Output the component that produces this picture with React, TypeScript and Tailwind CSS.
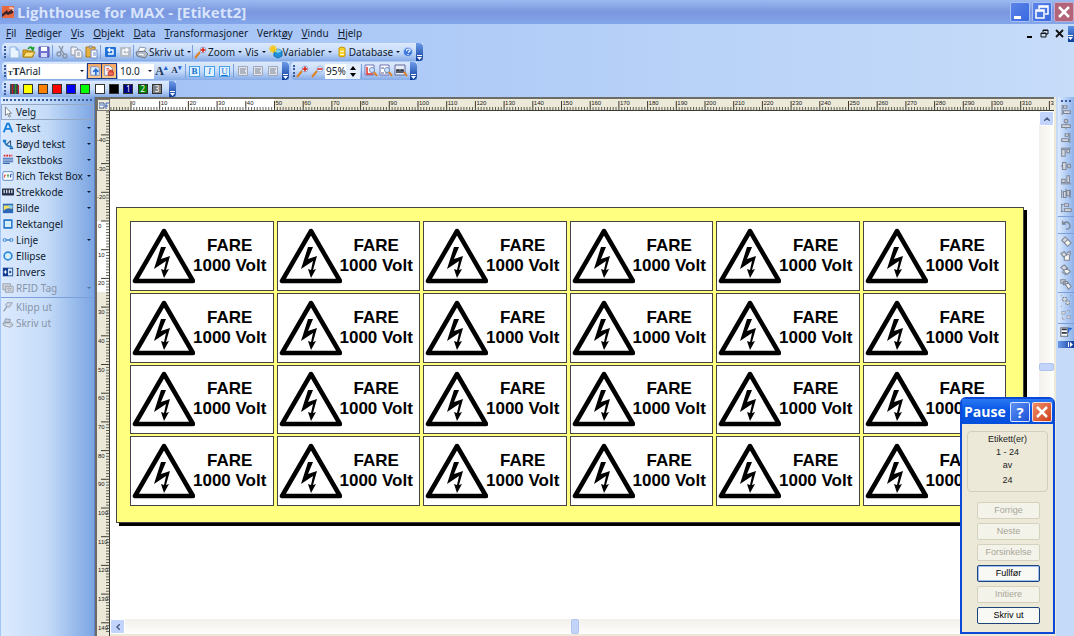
import { useState } from "react";
import type { ReactNode } from "react";

/**
 * Label editor workspace: title bar, menus, toolbars, rulers, sheet and print dialog
 */

const menus = ["Fil", "Rediger", "Vis", "Objekt", "Data", "Transformasjoner", "Verktøy", "Vindu", "Hjelp"];

const swatches = [
  { name: "Gul", color: "#ffff00" },
  { name: "Oransje", color: "#ff8000" },
  { name: "Rød", color: "#ff0000" },
  { name: "Blå", color: "#0000ff" },
  { name: "Grønn", color: "#00ff00" },
  { name: "Hvit", color: "#ffffff" },
  { name: "Svart", color: "#000000" },
  { name: "Farge 1", color: "#000080", text: "1" },
  { name: "Farge 2", color: "#008000", text: "2" },
  { name: "Farge 3", color: "#808080", text: "3" },
];

// 14x14 drawings shared by all toolbars
const icons: Record<string, ReactNode> = {
  newDoc: (
    <>
      <path d="M3 2h6l3 3v8H3z" fill="#e8f5ff" stroke="#8fb4e0" />
      <path d="M9 2v3h3" fill="#9cc8f0" stroke="#8fb4e0" />
    </>
  ),
  open: (
    <>
      <path d="M1 5h4l1 1h5v6H1z" fill="#e0a820" stroke="#b08010" />
      <path d="M1 12l3-5h9l-3 5z" fill="#ffe27a" stroke="#b08010" />
      <path d="M6 4q3-4 5 0M9 3l2 2 1-3" fill="none" stroke="#20a030" strokeWidth="1.5" />
    </>
  ),
  save: (
    <>
      <path d="M2 2h10v10H2z" fill="#7070d0" stroke="#5050a8" />
      <path d="M4 2h6v4H4z" fill="#fff" />
      <path d="M4 8h6v4H4z" fill="#d8dcf8" />
    </>
  ),
  cut: (
    <g fill="none" stroke="#8a94a4" strokeWidth="1.4">
      <path d="M4 1l5 8M8 1L5 8" />
      <circle cx="4" cy="9" r="2" />
      <circle cx="10" cy="11" r="2" />
    </g>
  ),
  copy: (
    <g fill="#eef0f4" stroke="#8f98a8">
      <path d="M1 2h5l2 2v6H1z" />
      <path d="M5 5h5l2 2v6H5z" />
      <path d="M7 8h3M7 10h3" />
    </g>
  ),
  paste: (
    <>
      <path d="M1 2h9v10H1z" fill="#e8b040" stroke="#a87820" />
      <path d="M4 1h3v2H4z" fill="#ddd" stroke="#888" />
      <path d="M6 5h6v8H6z" fill="#fff" stroke="#6c8cc8" />
      <path d="M8 8h3M8 10h3" stroke="#6c8cc8" />
    </>
  ),
  undo: (
    <>
      <rect x="2" y="2" width="11" height="10" rx="1" fill="#2070d8" />
      <path d="M5 9h5V5H5M7 3L5 5l2 2" fill="none" stroke="#fff" strokeWidth="1.4" />
    </>
  ),
  redo: (
    <>
      <rect x="2" y="2" width="11" height="10" rx="1" fill="#b4bcc8" />
      <path d="M10 9H5V5h5M8 3l2 2-2 2" fill="none" stroke="#fff" strokeWidth="1.4" />
    </>
  ),
  printer: (
    <>
      <path d="M5 2l6 1-2 4-6-1z" fill="#fff" stroke="#8c98a8" />
      <path d="M1 7l9-1 3 3-3 4-8-2z" fill="#b4bcc8" stroke="#6c7888" />
      <path d="M4 9l5 1" stroke="#fff" />
    </>
  ),
  printerGray: (
    <g fill="#c4ccd8" stroke="#8c98a8">
      <path d="M4 2l6 1-2 4-5-1z" />
      <path d="M1 7l9-1 3 3-3 3-8-2z" />
      <path d="M4 9l5 1" stroke="#fff" />
    </g>
  ),
  wand: (
    <>
      <path d="M1 13l5-6" stroke="#e08020" strokeWidth="2" />
      <circle cx="9" cy="5" r="3" fill="#dcecff" stroke="#9cb4dc" />
      <path d="M9 2.500v5M6.500 5h5" stroke="#e02010" strokeWidth="1.5" />
    </>
  ),
  wandMinus: (
    <>
      <path d="M1 13l5-6" stroke="#e08020" strokeWidth="2" />
      <circle cx="9" cy="5" r="3" fill="#dcecff" stroke="#9cb4dc" />
      <path d="M6.500 5h5" stroke="#e02010" strokeWidth="1.5" />
    </>
  ),
  variable: (
    <>
      <path d="M5 6l4-2 4 2v5l-4 2-4-2z" fill="#2090d8" stroke="#1070b0" />
      <path d="M5 6l4 2 4-2-4-2z" fill="#80d0f8" />
      <path d="M4 0v8M0 4h8M1 1l6 6M7 1L1 7" stroke="#f8c818" strokeWidth="1.5" />
    </>
  ),
  database: (
    <>
      <path d="M4 3q3-2 6 0v8q-3 2-6 0z" fill="#f8d020" stroke="#c89808" />
      <path d="M5 6q2 1 4 0M5 9q2 1 4 0" fill="none" stroke="#fff" />
    </>
  ),
  help: (
    <>
      <circle cx="7" cy="7" r="4.5" fill="#3c78e0" stroke="#a8c8f8" />
      <path d="M5.5 6q0-2 2-2t1.5 2L7 7.500M7 9v1" fill="none" stroke="#fff" strokeWidth="1.2" />
    </>
  ),
  tagUp: (
    <>
      <path d="M2 2h8l2 2v8H2z" fill="#e4f0ff" stroke="#6c8cc8" />
      <path d="M8 12V6M5 8l3-3 3 3" fill="none" stroke="#2870d0" strokeWidth="2" />
    </>
  ),
  tagRed: (
    <>
      <path d="M2 1h6l3 3v8H2z" fill="#fff" stroke="#6c8cc8" />
      <path d="M4 4h3M4 6h4" stroke="#e03020" />
      <path d="M6 8h6v4H6zM8 8V6h3v2" fill="#f07060" stroke="#c03020" />
    </>
  ),
  alignText: (
    <>
      <path d="M2.500 2.500h9v9h-9z" fill="#e0e4ec" stroke="#a0a8b8" />
      <path d="M4 5h6M4 7h5M4 9h6" stroke="#7c8494" />
    </>
  ),
  zoomPage: (
    <>
      <path d="M1 1h9v10H1z" fill="#fff" stroke="#7070b8" />
      <path d="M3 3v7h6" fill="none" stroke="#e03028" strokeWidth="1.500" />
      <circle cx="8" cy="6" r="2.5" fill="#cfe4ff" stroke="#7090c0" />
      <path d="M10 8l3 4" stroke="#e08020" strokeWidth="2" />
    </>
  ),
  zoomSelection: (
    <>
      <path d="M1 1h9v10H1z" fill="#fff" stroke="#7070b8" />
      <path d="M2 9h3M6 9h3M2 4h3" stroke="#506090" />
      <circle cx="8" cy="6" r="2.5" fill="#cfe4ff" stroke="#7090c0" />
      <path d="M10 8l3 4" stroke="#e08020" strokeWidth="2" />
    </>
  ),
  zoomObjects: (
    <>
      <path d="M1 1h10v10H1z" fill="#e8ecf8" stroke="#606898" />
      <path d="M3 9V6h2v3M7 9V6h2v3" fill="none" stroke="#202838" strokeWidth="1.5" />
      <path d="M10 8l3 4" stroke="#e08020" strokeWidth="2" />
    </>
  ),
  pointer: <path d="M4 1v10l2.500-2 2 4 1.500-1-2-3.500h3z" fill="#fff" stroke="#6c7480" />,
  text: <path d="M2 12L6 2h2l4 10M4 8h6" fill="none" stroke="#1880d8" strokeWidth="2.200" />,
  curved: (
    <>
      <path d="M1 2h4v3H1z" fill="#2080c8" />
      <path d="M3 4q1 6 9 6" fill="none" stroke="#2080c8" strokeWidth="2" />
      <path d="M5 8l5-5M10 3v6" stroke="#305080" strokeWidth="1.200" />
      <path d="M9 12h4" stroke="#1860b0" strokeWidth="2" />
    </>
  ),
  textbox: (
    <>
      <path d="M2 2h10" stroke="#e02020" strokeWidth="2" strokeDasharray="2 1" />
      <path d="M1 5h12M1 7h12M1 9h12M1 11h8" stroke="#3c68b0" strokeWidth="1.300" />
    </>
  ),
  rich: (
    <>
      <rect x="1" y="2" width="12" height="10" rx="1" fill="#fff" stroke="#4878c0" />
      <path d="M3 9V6h2" fill="none" stroke="#e03020" />
      <path d="M7 5v4M6 6h2" stroke="#209030" />
      <path d="M10 9V5h2M9 7h2" fill="none" stroke="#2050c0" />
    </>
  ),
  barcode: (
    <>
      <rect x="0" y="3" width="14" height="8" rx="1" fill="#202c48" />
      <path d="M2.500 4.500v4M5.500 4.500v4M8.500 4.500v4M11.500 4.500v4" stroke="#fff" strokeWidth="1.300" />
    </>
  ),
  image: (
    <>
      <rect x="1" y="2" width="12" height="11" fill="#2c68b8" />
      <path d="M2 4h10v4q-6-2-10 2z" fill="#f8e060" />
      <path d="M7 4h5v3q-4 0-5-3z" fill="#88d0f8" />
    </>
  ),
  rect: <path d="M2.500 2.500h9v9h-9z" fill="#d4eeff" stroke="#2878c8" strokeWidth="1.800" />,
  line: (
    <g fill="#c8e4ff" stroke="#2878c8">
      <path d="M4 7h6" strokeWidth="1.500" />
      <circle cx="3" cy="7" r="1.800" />
      <circle cx="11" cy="7" r="1.800" />
    </g>
  ),
  ellipse: <circle cx="7" cy="7" r="4.500" fill="#d4eeff" stroke="#3088d8" strokeWidth="2" />,
  invert: (
    <>
      <path d="M1 2h12v10H1z" fill="#103c90" />
      <path d="M7 3h5v8H7z" fill="#d8e8ff" />
      <path d="M2 7h4M4 5v4" stroke="#fff" strokeWidth="1.300" />
      <path d="M8 7h3M9.500 5.500v3" stroke="#103c90" strokeWidth="1.300" />
    </>
  ),
  rfid: (
    <g fill="#d0d4dc" stroke="#98a0ac">
      <path d="M1 2h9v7H1z" />
      <path d="M4 5h9v7H4z" />
      <path d="M6 8q2-2 5 0M7 10q2-1 3 0" fill="none" />
    </g>
  ),
  clip: (
    <>
      <path d="M2 12l4-6" stroke="#909cb0" strokeWidth="1.500" />
      <path d="M4 5l2-3h6L9 7H7z" fill="#d0d8e4" stroke="#909cb0" />
    </>
  ),
  alignLeft: (
    <>
      <path d="M2.500 1v12" />
      <path d="M4 2h4v3H4zM4 8h8v3H4z" />
    </>
  ),
  alignCenter: (
    <>
      <path d="M7 1v12" />
      <path d="M5 2h4v3H5zM2 8h10v3H2z" />
    </>
  ),
  alignRight: (
    <>
      <path d="M11.500 1v12" />
      <path d="M6 2h4v3H6zM2 8h8v3H2z" />
    </>
  ),
  alignTop: (
    <>
      <path d="M1 2.500h12" />
      <path d="M2 4h4v8H2zM8 4h3v4H8z" />
    </>
  ),
  alignMiddle: (
    <>
      <path d="M1 7h12" />
      <path d="M3 3h4v8H3zM9 5h3v4H9z" />
    </>
  ),
  alignBottom: (
    <>
      <path d="M1 11.500h12" />
      <path d="M2 6h4v4H2zM8 2h3v8H8z" />
    </>
  ),
  spreadX: (
    <>
      <path d="M2 2v10M12 2v10M7 1v3" />
      <path d="M4 4h3v7H4zM8 3h3v6H8z" />
    </>
  ),
  spreadY: (
    <>
      <path d="M2 2v10M1 3h3M1 11h3" />
      <path d="M5 2h5v3H5zM5 8h8v3H5z" />
    </>
  ),
  rotate: <path d="M3 2v4h4M3 6q5-5 8 0t-4 6" fill="none" strokeWidth="1.500" />,
  front: (
    <>
      <path d="M2 5l4-4 4 4-4 4z" />
      <path d="M5 8l4-4 4 4-4 4z" fill="#f4f4f0" />
    </>
  ),
  back: (
    <>
      <path d="M5 5h6v7H5z" fill="#f4f4f0" />
      <path d="M1 4l4-2 3 4-4 2zM8 3l4-1v4" />
    </>
  ),
  forward: (
    <>
      <path d="M1 4l4-3 4 4-4 3z" />
      <path d="M4 8l4-3 4 4-4 3z" fill="#f4f4f0" />
      <path d="M2 9l5 4" />
    </>
  ),
  backward: (
    <>
      <path d="M1 2h5v4H1zM4 4h5v4H4z" />
      <path d="M6 7l4-1 3 4-3 3z" fill="#f4f4f0" />
    </>
  ),
  group: <path d="M3 3h5v4H3zM7 7h4v4H7zM1 1h1M12 1h1M1 13h1M12 13h1" strokeDasharray="2 1" />,
  ungroup: <path d="M2 3h4v3H2zM8 8h4v3H8zM8 2h3v3M3 9v3h3" strokeDasharray="1 1" />,
  form: (
    <>
      <path d="M1 2h8v10H1z" fill="#fff" stroke="#687080" />
      <path d="M2 4h6M2 8h6" stroke="#303848" strokeWidth="2" />
      <path d="M10 8V3h2M10 2l3 1-2 2" fill="none" stroke="#2060d0" />
    </>
  ),
};

function Icon({ name, className = "h-3.5 w-3.5" }: { name: string; className?: string }) {
  return (
    <svg viewBox="0 0 14 14" className={`shrink-0 ${className}`} aria-hidden="true">
      {icons[name]}
    </svg>
  );
}

function Tool({ name, label }: { name: string; label: string }) {
  return (
    <button type="button" aria-label={label} className="flex w-[15px] shrink-0 justify-center">
      <Icon name={name} />
    </button>
  );
}

function MenuTool({ name, label }: { name?: string; label: string }) {
  return (
    <button type="button" className="flex shrink-0 items-center">
      {name && <Icon name={name} />}
      <span>{label}</span>
      <Arrow className="ml-[3px]" />
    </button>
  );
}

function Arrow({ className = "" }: { className?: string }) {
  return (
    <svg viewBox="0 0 4 2" className={`h-0.5 w-1 shrink-0 ${className}`} aria-hidden="true">
      <path d="M0 0h4L2 2z" fill="#101828" />
    </svg>
  );
}

function Separator() {
  return <span className="mx-px h-3.5 w-px shrink-0 bg-[#7c9fdc]" />;
}

function Bar({ children, className = "" }: { children: ReactNode; className?: string }) {
  return (
    <div
      className={`flex items-center rounded-l-sm bg-linear-to-b from-[#dce9fd] via-[#c6dbfa] to-[#86abe6] ${className}`}
    >
      <span className="ml-0.5 h-3 shrink-0 border-l-2 border-dotted border-[#3b5c9c]" />
      {children}
      <span className="ml-auto flex h-full w-[7px] shrink-0 items-end justify-center rounded-r-sm bg-linear-to-b from-[#6d9bea] to-[#0a3c9c] pb-px">
        <svg viewBox="0 0 5 5" className="h-[5px] w-[5px]" aria-hidden="true">
          <path d="M0 0h5v1H0zM0 2h5L2.500 5z" fill="#fff" />
        </svg>
      </span>
    </div>
  );
}

function TitleBar() {
  return (
    <header className="flex h-6 shrink-0 items-center bg-linear-to-b from-[#9bb9f0] via-[#7a96df] to-[#83a6ea] pl-0.5">
      <svg viewBox="0 0 12 12" className="h-3 w-3 shrink-0" aria-hidden="true">
        <rect width="12" height="12" rx="1" fill="#e86840" />
        <path d="M0 8l5-4 1 2 5-3v4L6 9 4 8l-4 3z" fill="#40242c" />
        <path d="M7 2h4v3" fill="none" stroke="#fff" />
      </svg>
      <h1 className="ml-[3px] font-['Open_Sans'] text-[15px] leading-6 font-bold whitespace-nowrap text-[#d8e4fc]">
        Lighthouse for MAX - [Etikett2]
      </h1>
      <div className="ml-auto flex h-5 gap-0.5">
        <button type="button" aria-label="Minimer" className="w-5 rounded-xs border border-[#a8c0f4] bg-linear-to-br from-[#5c84e8] to-[#3868e0]">
          <svg viewBox="0 0 18 18" aria-hidden="true">
            <path d="M3 13h7v3H3z" fill="#fff" />
          </svg>
        </button>
        <button type="button" aria-label="Gjenopprett" className="w-5 rounded-xs border border-[#a8c0f4] bg-linear-to-br from-[#5c84e8] to-[#3868e0]">
          <svg viewBox="0 0 18 18" fill="none" stroke="#fff" aria-hidden="true">
            <path d="M6 6V3h9v8h-3M6 4h9" strokeWidth="1.500" />
            <path d="M3 7h8v8H3zM3 8h8" strokeWidth="1.500" />
          </svg>
        </button>
        <button type="button" aria-label="Lukk" className="w-5 rounded-xs border border-[#c8a8c8] bg-[#b46478]">
          <svg viewBox="0 0 18 18" aria-hidden="true">
            <path d="M4 4l10 10M14 4L4 14" stroke="#fff" strokeWidth="2.500" />
          </svg>
        </button>
      </div>
    </header>
  );
}

function MenuBar() {
  return (
    <nav className="flex h-[19px] shrink-0 items-center pl-1.5 text-[10px]">
      <ul className="flex gap-[9px]">
        {menus.map((menu) => {
          // The underlined letter of "Verktøy" is not the first one
          const at = menu === "Verktøy" ? 5 : 0;
          return (
            <li key={menu}>
              <button type="button">
                {menu.slice(0, at)}
                <u>{menu[at]}</u>
                {menu.slice(at + 1)}
              </button>
            </li>
          );
        })}
      </ul>
      <div className="ml-auto flex h-full items-center gap-1">
        <div className="flex items-center gap-1.5">
          <button type="button" aria-label="Minimer dokument">
            <svg viewBox="0 0 9 9" className="h-[9px] w-[9px]" aria-hidden="true">
              <path d="M2 7h5v2H2z" />
            </svg>
          </button>
          <button type="button" aria-label="Gjenopprett dokument">
            <svg viewBox="0 0 9 9" className="h-[9px] w-[9px]" fill="none" stroke="#111" aria-hidden="true">
              <path d="M3 3V1h5v4H6M3 1.500h5M1 4h5v4H1zM1 4.500h5" />
            </svg>
          </button>
          <button type="button" aria-label="Lukk dokument">
            <svg viewBox="0 0 9 9" className="h-[9px] w-[9px]" stroke="#111" strokeWidth="1.800" aria-hidden="true">
              <path d="M1 1l7 7M8 1L1 8" />
            </svg>
          </button>
        </div>
        <span className="flex h-4 w-1.5 items-end bg-linear-to-b from-[#5c92e8] to-[#0a3c9c] pb-0.5">
          <svg viewBox="0 0 5 5" className="h-[5px] w-[5px]" aria-hidden="true">
            <path d="M0 0h5v1H0zM0 2h5L2.500 5z" fill="#fff" />
          </svg>
        </span>
      </div>
    </nav>
  );
}

function StyleTool({ letter, label, className }: { letter: string; label: string; className: string }) {
  return (
    <button type="button" aria-label={label} className="flex w-[15px] shrink-0 justify-center">
      <span className={`h-[11px] w-[11px] border border-[#48a0e8] bg-[#dff0ff] text-center font-['Liberation_Serif'] text-[9px] leading-[9px] text-[#1870d0] ${className}`}>
        {letter}
      </span>
    </button>
  );
}

function Toolbars() {
  const [zoom, setZoom] = useState("95%");

  return (
    <div className="flex shrink-0 flex-col items-start gap-px pl-0.5 text-[10px]">
      <Bar className="h-[18px] w-[421px]">
        <Tool name="newDoc" label="Ny" />
        <Tool name="open" label="Åpne" />
        <Tool name="save" label="Lagre" />
        <Separator />
        <Tool name="cut" label="Klipp" />
        <Tool name="copy" label="Kopier" />
        <Tool name="paste" label="Lim inn" />
        <Separator />
        <Tool name="undo" label="Angre" />
        <Tool name="redo" label="Gjør om" />
        <Separator />
        <MenuTool name="printer" label="Skriv ut" />
        <Separator />
        <div className="flex gap-[3px]">
          <MenuTool name="wand" label="Zoom" />
          <MenuTool label="Vis" />
          <MenuTool name="variable" label="Variabler" />
          <MenuTool name="database" label="Database" />
        </div>
        <Tool name="help" label="Hjelp" />
      </Bar>
      <div className="flex gap-0.5">
        <Bar className="h-[18px] w-[287px]">
          <label className="relative ml-px flex h-[15px] w-[79px] shrink-0 items-center bg-white pl-px">
            <span className="font-['Liberation_Serif'] text-[10px] font-bold" aria-hidden="true">
              <span className="text-[7px]">T</span>T
            </span>
            <select aria-label="Skrift" className="flex-1 appearance-none bg-transparent outline-none">
              <option>Arial</option>
            </select>
            <Arrow className="pointer-events-none absolute right-0.5" />
          </label>
          <div className="mx-px flex h-4 shrink-0">
            <button type="button" aria-label="Tilpass opp" className="flex w-[15px] items-center justify-center border border-[#203c88] bg-linear-to-b from-[#f8a860] to-[#fcc888]">
              <Icon name="tagUp" className="h-3 w-3" />
            </button>
            <button type="button" aria-label="Tilpass ramme" className="-ml-px flex w-4 items-center justify-center border border-[#203c88] bg-linear-to-b from-[#f8a860] to-[#fcc888]">
              <Icon name="tagRed" className="h-3 w-3" />
            </button>
          </div>
          <label className="relative flex h-[15px] w-[36px] shrink-0 items-center bg-white pl-0.5">
            <select aria-label="Størrelse" className="w-full appearance-none bg-transparent outline-none">
              <option>10.0</option>
            </select>
            <Arrow className="pointer-events-none absolute right-0.5" />
          </label>
          <div className="flex shrink-0 font-['Liberation_Serif'] font-bold text-[#243858]">
            <button type="button" aria-label="Større skrift" className="flex w-[15px] items-center justify-center text-[12px]">
              A<sup className="text-[7px] text-[#2060d0]">▴</sup>
            </button>
            <button type="button" aria-label="Mindre skrift" className="flex w-[15px] items-center justify-center text-[9px]">
              A<sup className="text-[7px] text-[#2060d0]">▾</sup>
            </button>
          </div>
          <Separator />
          <StyleTool letter="B" label="Fet" className="font-bold" />
          <StyleTool letter="I" label="Kursiv" className="italic" />
          <StyleTool letter="U" label="Understreket" className="underline" />
          <Separator />
          <Tool name="alignText" label="Venstrejuster" />
          <Tool name="alignText" label="Midtstill" />
          <Tool name="alignText" label="Høyrejuster" />
        </Bar>
        <Bar className="h-[18px] w-[126px]">
          <Tool name="wand" label="Zoom inn" />
          <Tool name="wandMinus" label="Zoom ut" />
          <input
            aria-label="Zoom prosent"
            value={zoom}
            onChange={(e) => setZoom(e.target.value)}
            className="h-[15px] w-[21px] shrink-0 bg-white pl-px outline-none"
          />
          <div className="flex h-[15px] w-3.5 shrink-0 flex-col items-center justify-between bg-[#e4eefc] py-0.5">
            <button type="button" aria-label="Øk">
              <svg viewBox="0 0 6 4" className="h-1 w-1.5" aria-hidden="true">
                <path d="M0 4h6L3 0z" />
              </svg>
            </button>
            <button type="button" aria-label="Reduser">
              <svg viewBox="0 0 6 4" className="h-1 w-1.5" aria-hidden="true">
                <path d="M0 0h6L3 4z" />
              </svg>
            </button>
          </div>
          <Separator />
          <Tool name="zoomPage" label="Vis side" />
          <Tool name="zoomSelection" label="Vis utvalg" />
          <Tool name="zoomObjects" label="Vis objekter" />
        </Bar>
      </div>
      <Bar className="h-4 w-[174px]">
        <div className="flex w-[160px] items-center justify-between px-1">
          <button type="button" aria-label="Flere farger">
            <svg viewBox="0 0 9 10" className="h-2.5 w-[9px]" aria-hidden="true">
              <path d="M1 0v10M4 0v10M7 0v10" stroke="#181818" strokeWidth="1.500" />
              <path d="M2.500 0v10M8.500 1v9" stroke="#c02020" />
              <path d="M5.500 0v10" stroke="#20a020" />
            </svg>
          </button>
          {swatches.map((s) => (
            <button
              key={s.name}
              type="button"
              aria-label={s.name}
              className="h-2.5 w-2.5 border border-[#333] text-center text-[8px] leading-[8px] text-white"
              style={{ backgroundColor: s.color }}
            >
              {s.text}
            </button>
          ))}
        </div>
      </Bar>
    </div>
  );
}

const drawTools = [
  { icon: "pointer", label: "Velg" },
  { icon: "text", label: "Tekst", menu: true },
  { icon: "curved", label: "Bøyd tekst", menu: true },
  { icon: "textbox", label: "Tekstboks", menu: true },
  { icon: "rich", label: "Rich Tekst Box", menu: true },
  { icon: "barcode", label: "Strekkode", menu: true },
  { icon: "image", label: "Bilde", menu: true },
  { icon: "rect", label: "Rektangel" },
  { icon: "line", label: "Linje", menu: true },
  { icon: "ellipse", label: "Ellipse" },
  { icon: "invert", label: "Invers" },
  { icon: "rfid", label: "RFID Tag", menu: true, disabled: true },
  { icon: "clip", label: "Klipp ut", disabled: true },
  { icon: "printerGray", label: "Skriv ut", disabled: true },
];

function DrawPanel() {
  return (
    <aside className="w-[95px] shrink-0 border-x border-l-[#a4c4fc] border-r-[#5c84c8] bg-linear-to-r from-[#dceafe] via-[#c4dbf8] to-[#7ba5e2] pt-0.5 text-[10px]">
      <div className="mx-0.5 mb-[3px] border-t-2 border-dotted border-[#3b5c9c]" />
      {drawTools.map((tool, i) => (
        <div key={tool.label} className={tool.label === "Klipp ut" ? "mt-px border-t border-[#7c9fdc] pt-px" : ""}>
          <button
            type="button"
            disabled={tool.disabled}
            className={`flex h-4 w-full items-center gap-0.5 pr-0.5 whitespace-nowrap ${
              i === 0 ? "border border-[#94a8c4]" : "border border-transparent"
            } ${tool.disabled ? "text-[#8894a8]" : "text-[#101c30]"}`}
          >
            <Icon name={tool.icon} className="h-3 w-3" />
            <span>{tool.label}</span>
            {tool.menu && <Arrow className={`ml-auto ${tool.disabled ? "opacity-40" : ""}`} />}
          </button>
        </div>
      ))}
    </aside>
  );
}

// Pixels for ten millimetres on the rulers
const STEP = 28.7;

function HorizontalRuler() {
  const ticks = Array.from({ length: 328 }, (_, i) => i - 7);
  return (
    <svg className="block h-3 w-full" fontFamily="Liberation Sans" aria-hidden="true">
      <rect width="100%" height="12" fill="#ece9d8" />
      <rect x="21" width="143" height="12" fill="#fff" />
      {ticks.map((t) => {
        const x = 21 + (t * STEP) / 10;
        return <path key={t} d={`M${x} ${t % 10 === 0 ? 2 : 8}V12`} stroke="#3c3c34" strokeWidth={t % 10 === 0 ? 1 : 0.8} />;
      })}
      {ticks
        .filter((t) => t % 10 === 0)
        .map((t) => (
          <text key={t} x={22 + (t * STEP) / 10} y="6" fontSize="6" fill="#202020">
            {t}
          </text>
        ))}
      <path d="M0 11.500H4000" stroke="#3c3c34" />
    </svg>
  );
}

function VerticalRuler() {
  const ticks = Array.from({ length: 182 }, (_, i) => i - 38);
  return (
    <svg className="block h-full w-[13px]" fontFamily="Liberation Sans" aria-hidden="true">
      <rect width="13" height="100%" fill="#ece9d8" />
      <rect y="110" width="13" height="71" fill="#fff" />
      {ticks.map((t) => {
        const y = 110 + (t * STEP) / 10;
        return <path key={t} d={`M${t % 10 === 0 ? 4 : 9} ${y}H13`} stroke="#3c3c34" strokeWidth={t % 10 === 0 ? 1 : 0.8} />;
      })}
      {ticks
        .filter((t) => t % 10 === 0)
        .map((t) => (
          <text key={t} x={t < 0 ? 0 : 1} y={117 + (t * STEP) / 10} fontSize="6" fill="#202020">
            {t < 0 ? t - 10 : t}
          </text>
        ))}
      <path d="M12.500 0V4000" stroke="#3c3c34" />
    </svg>
  );
}

function WarningLabel() {
  return (
    <div className="flex items-center border border-[#444] bg-white">
      <svg viewBox="0 0 64 56" className="h-14 w-16 shrink-0" aria-hidden="true">
        <path d="M33 3L4 53h58z" fill="#fff" stroke="#000" strokeWidth="4.500" strokeLinejoin="round" />
        <path d="M30 19h5l-5 12 9-3-4 14 3-1-5 9-3-9 3 1 2-9-12 8z" />
      </svg>
      <div className="-ml-0.5 text-center font-['Liberation_Sans'] text-[17px] leading-5 font-bold whitespace-nowrap text-black">
        <p>FARE</p>
        <p>1000 Volt</p>
      </div>
    </div>
  );
}

function Sheet() {
  return (
    <div className="mt-24 ml-1.5 h-[316px] w-[908px] shrink-0 border border-[#444] bg-[#ffff80] pt-[13px] pr-[17px] pb-4 pl-[13px] shadow-[3px_3px_0_0_#000]">
      <div className="grid h-full grid-cols-6 grid-rows-4 gap-x-[3px] gap-y-0.5">
        {Array.from({ length: 24 }, (_, i) => (
          <WarningLabel key={i} />
        ))}
      </div>
    </div>
  );
}

function Workspace() {
  return (
    <main className="flex min-w-0 flex-1 flex-col border-t-2 border-l-2 border-[#6c6c64] bg-white">
      <div className="flex">
        <div className="flex h-3 w-[13px] shrink-0 items-center justify-center border border-[#777] bg-[#ece9d8]">
          <svg viewBox="0 0 10 9" className="h-[9px] w-2.5" aria-hidden="true">
            <path d="M0 2h5v5H0z" fill="#fff" stroke="#3c5488" />
            <path d="M1 4h3M7 8V2h3M6 5h3" fill="none" stroke="#3868c8" />
          </svg>
        </div>
        <div className="min-w-0 flex-1">
          <HorizontalRuler />
        </div>
      </div>
      <div className="flex min-h-0 flex-1">
        <div className="w-[13px] shrink-0 overflow-hidden">
          <VerticalRuler />
        </div>
        <div className="flex min-w-0 flex-1 flex-col">
          <div className="flex min-h-0 flex-1">
            <div className="min-w-0 flex-1 overflow-hidden">
              <Sheet />
            </div>
            <div className="flex w-[15px] shrink-0 flex-col bg-linear-to-r from-[#f2f0ea] to-[#fefefc]">
              <button type="button" aria-label="Rull opp" className="flex h-[15px] items-center justify-center rounded-xs border border-white bg-[#c2d3fc]">
                <svg viewBox="0 0 6 4" className="h-1 w-1.5" fill="none" stroke="#4d6185" strokeWidth="1.500" aria-hidden="true">
                  <path d="M0 4l3-3 3 3" />
                </svg>
              </button>
              <div className="flex-[237]" />
              <div className="h-2 rounded-xs border border-[#b0c4f0] bg-[#c2d3fc]" />
              <div className="flex-[248]" />
            </div>
          </div>
          <div className="flex h-[15px] shrink-0 bg-linear-to-b from-[#f2f0ea] to-[#fefefc]">
            <button type="button" aria-label="Rull til venstre" className="flex w-[15px] items-center justify-center rounded-xs border border-white bg-[#c2d3fc]">
              <svg viewBox="0 0 4 6" className="h-1.5 w-1" fill="none" stroke="#4d6185" strokeWidth="1.500" aria-hidden="true">
                <path d="M4 0L1 3l3 3" />
              </svg>
            </button>
            <div className="flex-[447]" />
            <div className="w-2 rounded-xs border border-[#b0c4f0] bg-[#c2d3fc]" />
            <div className="flex-[476]" />
          </div>
          <div className="h-0.5 shrink-0 bg-[#ece9d8]" />
        </div>
      </div>
    </main>
  );
}

const arrangeGroups = [
  [
    { icon: "alignLeft", label: "Juster venstre" },
    { icon: "alignCenter", label: "Juster midt" },
    { icon: "alignRight", label: "Juster høyre" },
    { icon: "alignTop", label: "Juster topp" },
    { icon: "alignMiddle", label: "Juster senter" },
    { icon: "alignBottom", label: "Juster bunn" },
    { icon: "spreadX", label: "Fordel vannrett" },
    { icon: "spreadY", label: "Fordel loddrett" },
  ],
  [{ icon: "rotate", label: "Roter" }],
  [
    { icon: "front", label: "Flytt fremst" },
    { icon: "back", label: "Flytt bakerst" },
    { icon: "forward", label: "Flytt fremover" },
    { icon: "backward", label: "Flytt bakover" },
  ],
  [
    { icon: "group", label: "Grupper" },
    { icon: "ungroup", label: "Del opp" },
  ],
  [{ icon: "form", label: "Skjema" }],
];

function ArrangePanel() {
  return (
    <aside className="flex w-5 shrink-0 flex-col items-end border-l-2 border-[#ece9d8] bg-[#c4daf8]">
      <div className="w-4 rounded-b-sm bg-linear-to-r from-[#dceafe] to-[#8db2ea] pt-[3px]">
        <div className="mx-[3px] border-t-2 border-dotted border-[#3b5c9c]" />
        {arrangeGroups.map((group, i) => (
          <div key={i} className={i > 0 ? "mt-px border-t border-[#7c9fdc] pt-px" : "pt-px"}>
            {group.map((tool) => (
              <button key={tool.icon} type="button" aria-label={tool.label} className="flex h-3.5 w-full items-center justify-center">
                <svg viewBox="0 0 14 14" className="h-3 w-3" fill="#d4d8e0" stroke="#7c8494" strokeWidth="1.200" aria-hidden="true">
                  {icons[tool.icon]}
                </svg>
              </button>
            ))}
          </div>
        ))}
        <div className="mt-0.5 flex h-[7px] items-center justify-end bg-linear-to-r from-[#6d9bea] to-[#0a3c9c] pr-px">
          <svg viewBox="0 0 5 5" className="h-[5px] w-[5px]" aria-hidden="true">
            <path d="M0 0h1v5H0zM2 0v5l3-2.500z" fill="#fff" />
          </svg>
        </div>
      </div>
    </aside>
  );
}

const dialogButtons = [
  { label: "Forrige", disabled: true },
  { label: "Neste", disabled: true },
  { label: "Forsinkelse", disabled: true },
  { label: "Fullfør", primary: true },
  { label: "Initiere", disabled: true },
  { label: "Skriv ut" },
];

function PauseDialog() {
  return (
    <section
      role="dialog"
      aria-labelledby="pause-title"
      className="absolute right-[19px] bottom-0.5 w-[95px] rounded-t-md border-2 border-[#0b48d8] bg-[#ece9d8] font-['Liberation_Sans'] text-[9px] text-[#222]"
    >
      <div className="flex h-[25px] items-center gap-0.5 bg-linear-to-b from-[#2878f4] via-[#0454e4] to-[#0450dc] pr-px pl-0.5">
        <h2 id="pause-title" className="flex-1 font-['Open_Sans'] text-[14px] font-bold text-white">
          Pause
        </h2>
        <button type="button" aria-label="Hjelp" className="h-5 w-5 rounded-xs border border-white/80 bg-linear-to-br from-[#5c90f4] to-[#1c50d8] font-['Open_Sans'] text-[15px] leading-[18px] font-bold text-white">
          ?
        </button>
        <button type="button" aria-label="Lukk" className="h-5 w-5 rounded-xs border border-white/80 bg-linear-to-br from-[#f08c68] to-[#cc3c14]">
          <svg viewBox="0 0 18 18" aria-hidden="true">
            <path d="M4 4l10 10M14 4L4 14" stroke="#fff" strokeWidth="2.500" />
          </svg>
        </button>
      </div>
      <div className="mx-[5px] mt-[7px] h-[61px] rounded-sm border border-[#d0cfbc] text-center leading-[13px]">
        <p className="mt-px">Etikett(er)</p>
        <p>1 - 24</p>
        <p>av</p>
        <p className="mt-0.5">24</p>
      </div>
      <div className="flex flex-col items-center gap-1 pt-2.5 pb-2 pl-0.5">
        {dialogButtons.map((b) => (
          <button
            key={b.label}
            type="button"
            disabled={b.disabled}
            className={`h-[17px] w-[63px] rounded-xs border text-center leading-[15px] ${
              b.disabled
                ? "border-[#d4d1bf] bg-[#f4f3ea] text-[#a8a698]"
                : b.primary
                  ? "border-[#1c4478] bg-[#f8f8f4] text-black ring-1 ring-[#9cbcf4] ring-inset"
                  : "border-[#1c4478] bg-[#f8f8f4] text-black"
            }`}
          >
            {b.label}
          </button>
        ))}
      </div>
    </section>
  );
}

export default function App() {
  return (
    <div className="relative flex h-screen flex-col overflow-hidden bg-linear-to-r from-[#9fbff5] to-[#c6dcf9] font-['Noto_Sans',sans-serif] text-[#101c30]">
      <TitleBar />
      <MenuBar />
      <Toolbars />
      <div className="flex min-h-0 flex-1">
        <DrawPanel />
        <Workspace />
        <ArrangePanel />
      </div>
      <PauseDialog />
    </div>
  );
}
